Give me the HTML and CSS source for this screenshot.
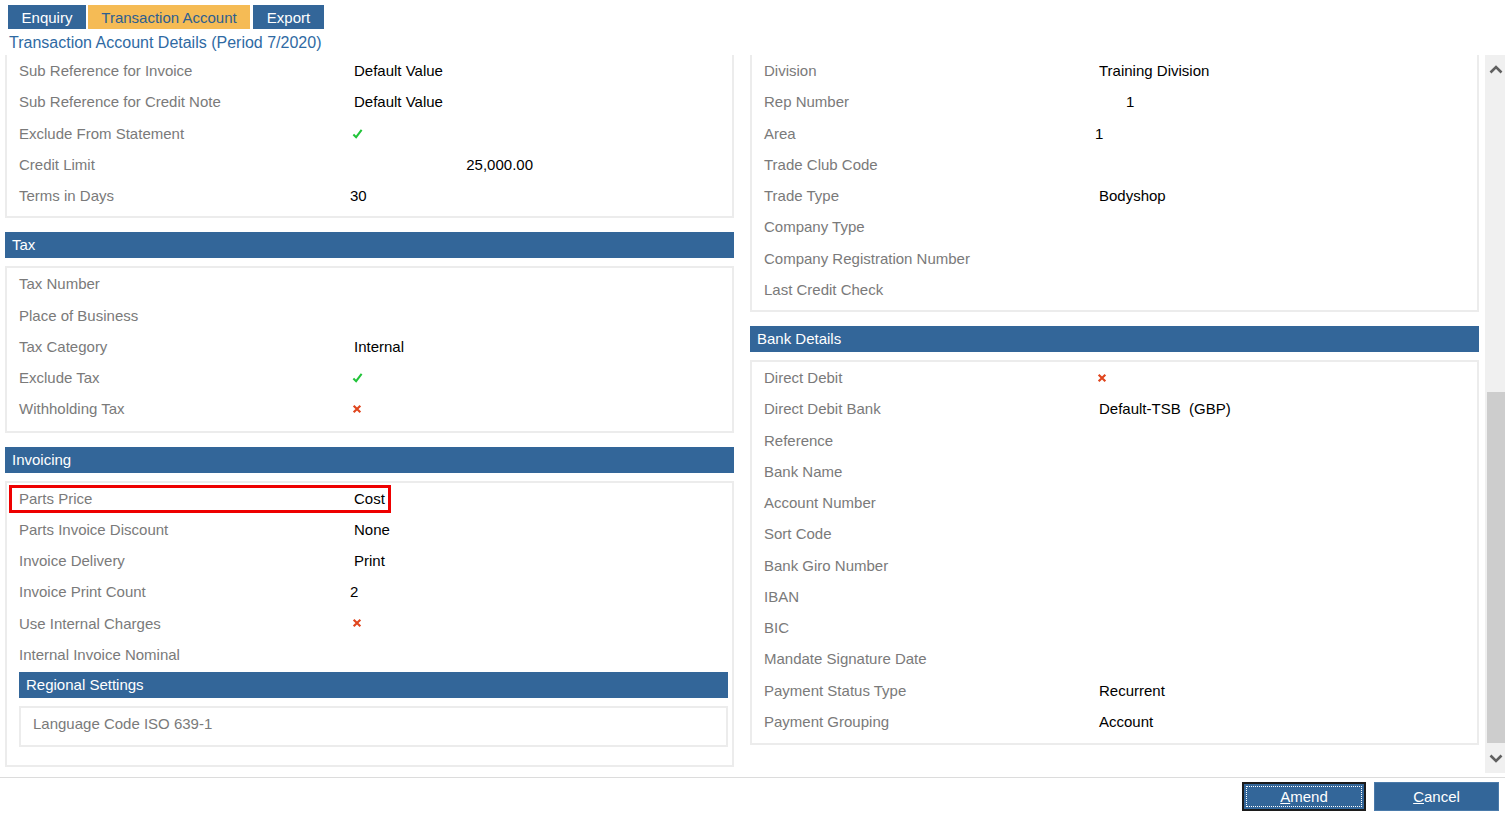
FILE: index.html
```html
<!DOCTYPE html>
<html lang="en">

<head>
    <meta charset="UTF-8">
    <title>Transaction Account Details</title>
    <link rel="stylesheet" href="styles.css">
</head>

<body>
    <div class="tabs">
        <div class="tab enquiry">Enquiry</div>
        <div class="tab active">Transaction Account</div>
        <div class="tab export">Export</div>
    </div>
    <div class="page-title">Transaction Account Details (Period 7/2020)</div>

    <div class="main">
        <div class="scroll-area">
            <div class="column">
                <div class="panel cut">
                    <div class="row"><span class="label">Sub Reference for Invoice</span><span class="value">Default Value</span></div>
                    <div class="row"><span class="label">Sub Reference for Credit Note</span><span class="value">Default Value</span></div>
                    <div class="row"><span class="label">Exclude From Statement</span><span class="value icon"><svg class="tick" viewBox="0 0 12 12"><path d="M1.5 7 L4.5 10 L10.5 2" /></svg></span></div>
                    <div class="row"><span class="label">Credit Limit</span><span class="value money">25,000.00</span></div>
                    <div class="row"><span class="label">Terms in Days</span><span class="value num">30</span></div>
                </div>

                <div class="section-head">Tax</div>
                <div class="panel">
                    <div class="row"><span class="label">Tax Number</span></div>
                    <div class="row"><span class="label">Place of Business</span></div>
                    <div class="row"><span class="label">Tax Category</span><span class="value">Internal</span></div>
                    <div class="row"><span class="label">Exclude Tax</span><span class="value icon"><svg class="tick" viewBox="0 0 12 12"><path d="M1.5 7 L4.5 10 L10.5 2" /></svg></span></div>
                    <div class="row"><span class="label">Withholding Tax</span><span class="value icon"><svg class="cross" viewBox="0 0 12 12"><path d="M2 2 L10 10 M10 2 L2 10" /></svg></span></div>
                </div>

                <div class="section-head">Invoicing</div>
                <div class="panel">
                    <div class="row marked"><span class="label">Parts Price</span><span class="value">Cost</span></div>
                    <div class="row"><span class="label">Parts Invoice Discount</span><span class="value">None</span></div>
                    <div class="row"><span class="label">Invoice Delivery</span><span class="value">Print</span></div>
                    <div class="row"><span class="label">Invoice Print Count</span><span class="value num">2</span></div>
                    <div class="row"><span class="label">Use Internal Charges</span><span class="value icon"><svg class="cross" viewBox="0 0 12 12"><path d="M2 2 L10 10 M10 2 L2 10" /></svg></span></div>
                    <div class="row"><span class="label">Internal Invoice Nominal</span></div>
                    <div class="sub-section">
                        <div class="section-head sub">Regional Settings</div>
                        <div class="panel">
                            <div class="row"><span class="label">Language Code ISO 639-1</span></div>
                        </div>
                    </div>
                </div>
            </div>

            <div class="column">
                <div class="panel cut">
                    <div class="row"><span class="label">Division</span><span class="value">Training Division</span></div>
                    <div class="row"><span class="label">Rep Number</span><span class="value num rep">1</span></div>
                    <div class="row"><span class="label">Area</span><span class="value num">1</span></div>
                    <div class="row"><span class="label">Trade Club Code</span></div>
                    <div class="row"><span class="label">Trade Type</span><span class="value">Bodyshop</span></div>
                    <div class="row"><span class="label">Company Type</span></div>
                    <div class="row"><span class="label">Company Registration Number</span></div>
                    <div class="row"><span class="label">Last Credit Check</span></div>
                </div>

                <div class="section-head">Bank Details</div>
                <div class="panel">
                    <div class="row"><span class="label">Direct Debit</span><span class="value icon"><svg class="cross" viewBox="0 0 12 12"><path d="M2 2 L10 10 M10 2 L2 10" /></svg></span></div>
                    <div class="row"><span class="label">Direct Debit Bank</span><span class="value">Default-TSB&nbsp; (GBP)</span></div>
                    <div class="row"><span class="label">Reference</span></div>
                    <div class="row"><span class="label">Bank Name</span></div>
                    <div class="row"><span class="label">Account Number</span></div>
                    <div class="row"><span class="label">Sort Code</span></div>
                    <div class="row"><span class="label">Bank Giro Number</span></div>
                    <div class="row"><span class="label">IBAN</span></div>
                    <div class="row"><span class="label">BIC</span></div>
                    <div class="row"><span class="label">Mandate Signature Date</span></div>
                    <div class="row"><span class="label">Payment Status Type</span><span class="value">Recurrent</span></div>
                    <div class="row"><span class="label">Payment Grouping</span><span class="value">Account</span></div>
                </div>
            </div>
        </div>

        <div class="scrollbar">
            <div class="arrow"><svg viewBox="0 0 14 9"><path d="M1.5 7.5 L7 2 L12.5 7.5" /></svg></div>
            <div class="track">
                <div class="thumb"></div>
            </div>
            <div class="arrow down"><svg viewBox="0 0 14 9"><path d="M1.5 1.5 L7 7 L12.5 1.5" /></svg></div>
        </div>
    </div>

    <div class="footer">
        <button class="btn focused"><span class="focus-ring"><u>A</u>mend</span></button>
        <button class="btn"><u>C</u>ancel</button>
    </div>
</body>

</html>
```

FILE: styles.css
```css
body {
    font-family: 'Liberation Sans', Arial, sans-serif;
    font-size: 15px;
    margin: 0;
    padding: 0;
    background-color: #fff;
    color: #000;
    overflow: hidden;
}

.tabs {
    display: flex;
    gap: 2px;
    padding: 5px 0 0 8px;
}

.tab {
    height: 24px;
    line-height: 25px;
    text-align: center;
    white-space: nowrap;
    background-color: #336699;
    color: #fff;
}

.tab.enquiry {
    width: 78px;
}

.tab.active {
    width: 162px;
    background-color: #f5bb55;
    color: #2d5f91;
}

.tab.export {
    width: 71px;
    margin-left: 1px;
}

.page-title {
    height: 26px;
    line-height: 28px;
    padding-left: 9px;
    font-size: 16px;
    color: #2f6aa3;
}

.main {
    display: flex;
    height: 722px;
    border-bottom: 1px solid #dcdcdc;
}

.scroll-area {
    flex: 1;
    display: flex;
    gap: 16px;
    padding-left: 5px;
    overflow: hidden;
}

.column {
    width: 729px;
}

.panel {
    border: 2px solid #ececec;
    padding: 0 4px 6px 12px;
}

.panel.cut {
    border-top: none;
    padding-bottom: 5px;
}

.row {
    display: flex;
    align-items: center;
    height: 31.25px;
}

.label {
    width: 331px;
    flex-shrink: 0;
    color: #7a7a7a;
}

.value {
    padding-left: 4px;
}

.value.num {
    padding-left: 0;
}

.value.rep {
    padding-left: 31px;
}

.value.money {
    width: 179px;
    text-align: right;
}

.value.icon {
    display: flex;
    align-items: center;
    padding-left: 2px;
}

.tick {
    width: 11px;
    height: 11px;
    fill: none;
    stroke: #22c43a;
    stroke-width: 2.2;
}

.cross {
    width: 10px;
    height: 10px;
    fill: none;
    stroke: #e0461e;
    stroke-width: 2.6;
}

/* red highlight drawn over the row */
.row.marked {
    position: relative;
}

.row.marked::after {
    content: "";
    position: absolute;
    left: -10px;
    top: 2px;
    width: 382px;
    height: 28px;
    box-sizing: border-box;
    border: 3px solid #ee0000;
}

.section-head {
    height: 26px;
    line-height: 26px;
    margin: 14px 0 8px;
    padding-left: 7px;
    background-color: #336699;
    color: #fff;
}

.sub-section {
    margin: 2px 0 12px;
}

.section-head.sub {
    margin: 0 0 8px;
}

.scrollbar {
    width: 20px;
    margin-left: 6px;
    height: 718px;
    display: flex;
    flex-direction: column;
    background-color: #f0f0f0;
}

.arrow {
    height: 28px;
    display: flex;
    align-items: center;
    justify-content: center;
    padding-left: 2px;
}

.arrow.down {
    height: 30px;
}

.arrow svg {
    width: 14px;
    height: 9px;
    fill: none;
    stroke: #606060;
    stroke-width: 2.6;
}

.track {
    flex: 1;
    display: flex;
    flex-direction: column;
    justify-content: flex-end;
    padding-left: 2px;
}

.thumb {
    height: 351px;
    background-color: #cdcdcd;
}

.footer {
    display: flex;
    justify-content: flex-end;
    gap: 8px;
    padding: 4px 6px 0 0;
}

.btn {
    width: 125px;
    height: 29px;
    padding: 0;
    border: 1px solid #4a7aaa;
    background-color: #336699;
    color: #fff;
    font-family: 'Liberation Sans', Arial, sans-serif;
    font-size: 15px;
    cursor: pointer;
}

.btn.focused {
    width: 124px;
    border: 2px solid #1c1c1c;
    padding: 2px;
}

.focus-ring {
    display: block;
    height: 19px;
    line-height: 19px;
    border: 1px dotted #fff;
}
```
